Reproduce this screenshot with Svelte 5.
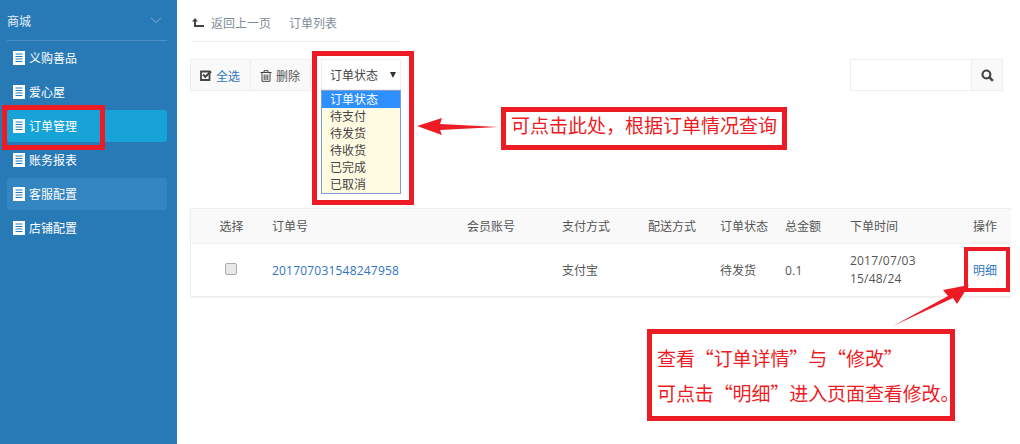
<script>
	const menu = [
		{ label: '义购善品' },
		{ label: '爱心屋' },
		{ label: '订单管理', state: 'active' },
		{ label: '账务报表' },
		{ label: '客服配置', state: 'hover' },
		{ label: '店铺配置' }
	];
	const statuses = ['订单状态', '待支付', '待发货', '待收货', '已完成', '已取消'];
	const columns = ['选择', '订单号', '会员账号', '支付方式', '配送方式', '订单状态', '总金额', '下单时间', '操作'];
</script>

<div class="page">
	<aside class="sidebar">
		<div class="side-head">
			<span>商城</span>
			<svg width="12" height="7" viewBox="0 0 12 7"><path d="M1 1l5 4.500L11 1" fill="none" stroke="#5f9bcb" stroke-width="1.300" /></svg>
		</div>
		<ul class="side-menu">
			{#each menu as item}
				<li class={item.state}>
					<svg width="12" height="14" viewBox="0 0 12 14">
						<path d="M0 0h12v14H0z" fill="#fff" />
						<path d="M2.500 3h7M2.500 5.500h7M2.500 8h7M2.500 10.500h7" stroke="#2a7ab7" stroke-width="1" />
					</svg>
					{item.label}
				</li>
			{/each}
		</ul>
	</aside>

	<main class="content">
		<div class="crumbs">
			<svg width="12" height="9" viewBox="0 0 12 9"><path d="M3 0L6 3.500H4V7h8v2H2V3.500H0z" fill="#444" /></svg>
			<span>返回上一页</span>
			<span class="current">订单列表</span>
		</div>

		<div class="toolbar">
			<div class="btn-group">
				<div class="btn">
					<svg width="12" height="11" viewBox="0 0 12 11">
						<path d="M1 1.500h8.500v8.500H1z" fill="none" stroke="#444" stroke-width="1.800" />
						<path d="M3 4.500l2.300 2.300L11 1.500" fill="none" stroke="#444" stroke-width="2" />
					</svg>
					<a href="#all">全选</a>
				</div>
				<div class="btn">
					<svg width="12" height="12" viewBox="0 0 11 12">
						<path d="M0 2.500h11M3.500 2.500V.7h4v1.800M1.500 3v8.300h8V3M3.700 4.500v5.500M5.500 4.500v5.500M7.300 4.500v5.500" fill="none" stroke="#444" stroke-width="1" />
					</svg>
					<span>删除</span>
				</div>
			</div>

			<div class="select-wrap">
				<div class="select"><span>订单状态</span><i></i></div>
				<ul class="options">
					{#each statuses as status, index}
						<li class:picked={index === 0}>{status}</li>
					{/each}
				</ul>
			</div>

			<div class="search">
				<div class="search-input"></div>
				<div class="search-btn">
					<svg width="13" height="13" viewBox="0 0 12 12">
						<circle cx="5" cy="5" r="3.600" fill="none" stroke="#444" stroke-width="2" />
						<path d="M7.800 7.800L11 11" stroke="#444" stroke-width="2.400" />
					</svg>
				</div>
			</div>
		</div>

		<div class="table">
			<div class="thead">
				{#each columns as col}
					<div>{col}</div>
				{/each}
			</div>
			<div class="tbody">
				<div><span class="check"></span></div>
				<div><a class="num" href="#order">201707031548247958</a></div>
				<div></div>
				<div>支付宝</div>
				<div></div>
				<div>待发货</div>
				<div class="num">0.1</div>
				<div class="time num">2017/07/03<br />15/48/24</div>
				<div><a href="#detail">明细</a></div>
			</div>
		</div>
	</main>

	<!-- annotations drawn over the page -->
	<div class="mark mark-menu"></div>
	<div class="mark mark-select"></div>
	<div class="mark mark-detail"></div>
	<div class="mark note note-select">可点击此处，根据订单情况查询</div>
	<div class="mark note note-detail">
		<p>查看“订单详情”与“修改”</p>
		<p>可点击“明细”进入页面查看修改。</p>
	</div>
	<svg class="arrows" width="1020" height="444" viewBox="0 0 1020 444">
		<path d="M417 126L442 118 440 124 498 127 440 130 442 135z" fill="#ed1c24" />
		<path d="M969 285L943 290 948 296 893 326 953 298 957 304z" fill="#ed1c24" />
	</svg>
</div>

<style>
	:global(body) {
		margin: 0;
		background: #fff;
	}

	.page {
		position: relative;
		display: flex;
		width: 1020px;
		height: 444px;
		overflow: hidden;
		font-family: "Open Sans", "Noto Sans CJK SC", sans-serif;
		font-size: 12px;
		color: #555;
	}

	.sidebar {
		flex: 0 0 177px;
		box-sizing: border-box;
		padding: 0 10px 0 7px;
		background: #287ab6;
		color: #fff;
	}

	.side-head {
		display: flex;
		align-items: center;
		justify-content: space-between;
		height: 41px;
		padding: 1px 5px 0 0;
		box-sizing: border-box;
		border-bottom: 1px solid #4b90c4;
		color: #e6f0f8;
	}

	.side-menu {
		list-style: none;
		margin: -1px 0 0;
		padding: 0;
	}

	.side-menu li {
		display: flex;
		align-items: center;
		gap: 4px;
		height: 32px;
		margin-top: 2px;
		padding-left: 6px;
		border-radius: 3px;
	}

	.side-menu li.active {
		background: #17a2d8;
	}

	.side-menu li.hover {
		background: #3386c2;
	}

	.content {
		flex: 1;
		min-width: 0;
		padding: 0 9px 0 13px;
	}

	.crumbs {
		display: flex;
		align-items: center;
		width: 208px;
		height: 42px;
		margin-left: 2px;
		box-sizing: border-box;
		padding-top: 4px;
		border-bottom: 1px solid #eee;
		color: #7f8c99;
	}

	.crumbs span {
		margin-left: 7px;
	}

	.crumbs .current {
		margin-left: 18px;
	}

	.toolbar {
		display: flex;
		align-items: flex-start;
		margin-top: 17px;
		height: 149px;
	}

	.btn-group {
		display: flex;
		height: 32px;
		box-sizing: border-box;
		border: 1px solid #eee;
		background: #f9f9f9;
	}

	.btn {
		display: flex;
		align-items: center;
		gap: 4px;
		width: 50px;
		padding: 1px 0 0 9px;
		box-sizing: content-box;
		color: #555;
	}

	.btn + .btn {
		border-left: 1px solid #eee;
	}

	a {
		color: #2f75c0;
		text-decoration: none;
	}

	.num {
		letter-spacing: 0.2px;
	}

	.select-wrap {
		width: 80px;
		margin-left: 10px;
	}

	.select {
		display: flex;
		align-items: center;
		justify-content: space-between;
		height: 31px;
		box-sizing: border-box;
		padding: 0 4px 0 8px;
		border: 1px solid #eee;
		color: #444;
	}

	.select i {
		width: 0;
		height: 0;
		border-style: solid;
		border-width: 6px 3.500px 0;
		border-color: #333 transparent transparent;
	}

	.options {
		list-style: none;
		margin: 0;
		padding: 0;
		border: 1px solid #7d9fd3;
		background: #fffbe3;
		color: #444;
	}

	.options li {
		height: 17px;
		line-height: 17px;
		padding-left: 8px;
	}

	.options li.picked {
		background: #2e8fff;
		color: #fff;
	}

	.search {
		display: flex;
		height: 32px;
		width: 153px;
		margin-left: auto;
		margin-right: 8px;
		box-sizing: border-box;
		border: 1px solid #eee;
	}

	.search-input {
		flex: 1;
	}

	.search-btn {
		display: flex;
		align-items: center;
		justify-content: center;
		width: 31px;
		box-sizing: border-box;
		border-left: 1px solid #eee;
		background: #f9f9f9;
	}

	.table {
		border-top: 1px solid #eee;
		border-bottom: 1px solid #eee;
		border-left: 1px solid #eee;
		box-shadow: 0 1px 1px #f5f5f5;
	}

	.thead,
	.tbody {
		display: grid;
		grid-template-columns: 81px 195px 95px 86px 72px 65px 65px 123px 38px;
		align-items: center;
	}

	.thead {
		height: 35px;
		box-sizing: border-box;
		background: #f9f9f9;
		border-bottom: 1px solid #eee;
		color: #555;
	}

	.tbody {
		height: 52px;
	}

	.thead > :first-child,
	.tbody > :first-child {
		text-align: center;
	}

	.check {
		display: inline-block;
		width: 10px;
		height: 10px;
		margin: 2px 1px 0 0;
		border: 1px solid #aaa;
		border-radius: 2px;
		background: #e9e9e9;
	}

	.time {
		line-height: 18px;
	}

	.mark {
		position: absolute;
		box-sizing: border-box;
		border: 5px solid #ed1c24;
	}

	.mark-menu {
		left: 2px;
		top: 105px;
		width: 103px;
		height: 45px;
	}

	.mark-select {
		left: 312px;
		top: 51px;
		width: 102px;
		height: 154px;
	}

	.mark-detail {
		left: 964px;
		top: 247px;
		width: 46px;
		height: 45px;
		border-width: 4px;
	}

	.note {
		color: #ed1c24;
		font-family: "Noto Sans CJK SC", sans-serif;
		font-size: 19px;
		background: #fff;
	}

	.note-select {
		left: 501px;
		top: 107px;
		width: 286px;
		height: 43px;
		line-height: 26px;
		padding-left: 5px;
	}

	.note-detail {
		left: 647px;
		top: 329px;
		width: 308px;
		height: 92px;
		padding: 6px 0 0 5px;
		letter-spacing: -0.1px;
	}

	.note-detail p {
		margin: 0;
		line-height: 35px;
		white-space: nowrap;
	}

	.arrows {
		position: absolute;
		left: 0;
		top: 0;
		pointer-events: none;
	}
</style>
